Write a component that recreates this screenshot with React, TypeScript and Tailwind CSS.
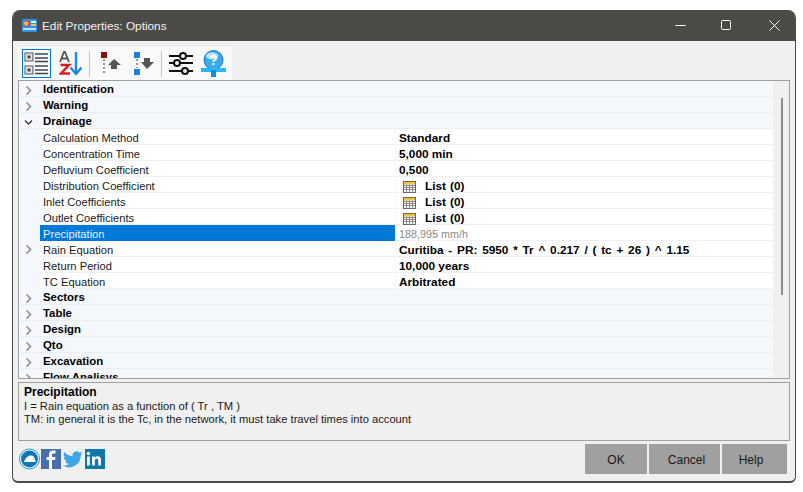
import React from "react";

const Chevron = ({ open }: { open?: boolean }) => (
  <svg width="9" height="9" viewBox="0 0 9 9" className="mt-px block" fill="none">
    {open ? (
      <path d="M1 2.500 L4.500 6 L8 2.500" stroke="#333" strokeWidth="1.300" />
    ) : (
      <path d="M2.500 0.500 L6.500 4.500 L2.500 8.500" stroke="#8a8a8a" strokeWidth="1.500" />
    )}
  </svg>
);

const GridIcon = () => (
  <svg width="13" height="12" viewBox="0 0 13 12" className="block">
    <rect x="0.500" y="0.500" width="12" height="11" fill="#fff" stroke="#666" />
    <rect x="1" y="1" width="11" height="2.500" fill="#f5c542" />
    <path d="M1 4.500H12M1 6.500H12M1 8.500H12M3.500 3.500V11.500M6.500 3.500V11.500M9.500 3.500V11.500" stroke="#888" strokeWidth="1" />
  </svg>
);

const Group = ({ name, open }: { name: string; open?: boolean }) => (
  <div className="flex h-4 shrink-0 items-center border-b border-[#e9eef5] bg-[#f4f7fc] pt-[2px]">
    <div className="flex w-[21px] shrink-0 justify-center pr-[3px]"><Chevron open={open} /></div>
    <span className="pl-[3px] text-[11.400px] font-bold text-black">{name}</span>
  </div>
);

const Row = ({
  name, children, expandable, selected, muted, wide,
}: { name: string; children: React.ReactNode; expandable?: boolean; selected?: boolean; muted?: boolean; wide?: boolean }) => (
  <div className="flex h-4 shrink-0 items-stretch bg-[#f4f7fc]">
    <div className="flex w-[21px] shrink-0 items-center justify-center pr-[3px]">{expandable && <Chevron />}</div>
    <div className={`flex w-[355px] shrink-0 items-center border-b pl-[3px] pt-1 text-[11.200px] ${selected ? "border-[#0078d7] bg-[#0078d7] text-[#eaf3fb]" : "border-[#f0f0f0] bg-white text-[#1a1a1a]"}`}>
      {name}
    </div>
    <div className={`ml-px flex flex-1 items-center border-b border-[#f0f0f0] bg-white pl-[3px] pt-1 ${muted ? "text-[10.800px] font-normal text-[#8a8a8a]" : "text-[11.800px] font-bold text-black"} ${wide ? "[word-spacing:1.500px]" : ""}`}>
      {children}
    </div>
  </div>
);

const ListVal = () => (
  <span className="flex items-center">
    <span className="ml-1 mr-[9px]"><GridIcon /></span>
    <span>List</span>
    <span className="ml-1">(0)</span>
  </span>
);

const Sep = () => <div className="h-[26px] w-px shrink-0 bg-[#c4c4c4]" />;

export default function App() {
  return (
    <div className="h-[492px] w-[803px] overflow-hidden bg-white" style={{ fontFamily: '"Liberation Sans", Arial, sans-serif' }}>
      <div className="ml-3 mt-[10px] flex h-[473px] w-[784px] flex-col overflow-hidden rounded-t-lg rounded-b-md border-x border-b-2 border-[#4b4a47] bg-[#f0f0f0]">
        {/* title bar */}
        <div className="flex h-[31px] shrink-0 items-center bg-[#4b4a47] pl-[9px] text-white">
          <svg width="15" height="13" viewBox="0 0 15 13" className="mr-[5px] block">
            <rect width="15" height="13" rx="1" fill="#2f8fe0" />
            <rect x="1" y="2" width="7" height="5" fill="#e8503a" />
            <circle cx="4" cy="4.500" r="2" fill="#f6c344" />
            <rect x="9" y="2" width="5" height="2" fill="#fff" />
            <rect x="9" y="5" width="5" height="2" fill="#f6c344" />
            <rect x="1" y="9" width="13" height="2" fill="#bfe0fb" />
          </svg>
          <span className="pt-[2px] text-[11.800px] text-[#f2f2f2]">Edit Properties: Options</span>
          <div className="ml-auto flex items-center">
            <svg width="11" height="11" viewBox="0 0 11 11" className="mr-[35px] block"><path d="M0.500 5.500H10.500" stroke="#fff" /></svg>
            <svg width="11" height="11" viewBox="0 0 11 11" className="mr-[37px] block"><rect x="0.500" y="0.500" width="9" height="9" rx="1" fill="none" stroke="#fff" /></svg>
            <svg width="11" height="11" viewBox="0 0 11 11" className="mr-[15px] block"><path d="M0.500 0.500L10.500 10.500M10.500 0.500L0.500 10.500" stroke="#fff" /></svg>
          </div>
        </div>

        <div className="flex min-h-0 flex-1 flex-col px-[5px]">
          {/* toolbar */}
          <div className="mt-[6px] flex h-[33px] w-[214px] shrink-0 items-center bg-[#f9f9f9] pl-1">
            <div className="flex h-[29px] w-[29px] shrink-0 items-center justify-center border border-[#0078d7] bg-[#f4f9fd]">
              <svg width="25" height="25" viewBox="0 0 25 25" className="block">
                <rect x="1" y="2" width="8" height="8" fill="#e4e4e4" stroke="#555" />
                <rect x="3.500" y="4.500" width="3" height="3" fill="#444" />
                <rect x="1" y="15" width="8" height="8" fill="#e4e4e4" stroke="#555" />
                <rect x="3.500" y="17.500" width="3" height="3" fill="#444" />
                <path d="M11 3H24M11 7H24M11 10.500H24M11 15H24M11 19H24M11 22.500H24" stroke="#444" strokeWidth="1.600" />
              </svg>
            </div>
            <svg width="23" height="25" viewBox="0 0 23 25" className="ml-2 block shrink-0">
              <path d="M1 11 L5 1 H6 L10 11 M2.500 7.500 H8.500" fill="none" stroke="#555" strokeWidth="1.800" />
              <path d="M1.500 14 H10 L2 22.500 H11" fill="none" stroke="#e01b24" strokeWidth="2.400" />
              <path d="M17 1 V22 M11.500 16.500 L17 23 L22.500 16.500" fill="none" stroke="#1e88e5" strokeWidth="2.400" />
            </svg>
            <div className="ml-[7px]"><Sep /></div>
            <svg width="20" height="25" viewBox="0 0 20 25" className="ml-[11px] block shrink-0">
              <rect x="0" y="1" width="6" height="6" fill="#8b1010" />
              <path d="M3 8V24" stroke="#777" strokeWidth="1.500" strokeDasharray="2 2" />
              <path d="M7 14 L13 8 L20 14 H16 V18 H10 V14Z" fill="#555" />
            </svg>
            <svg width="21" height="25" viewBox="0 0 21 25" className="ml-3 block shrink-0">
              <rect x="1" y="1" width="6" height="6" fill="#1e7fe0" />
              <rect x="1" y="18" width="6" height="6" fill="#1e7fe0" />
              <path d="M4 8V17" stroke="#777" strokeWidth="1.500" strokeDasharray="2 2" />
              <path d="M11 7 H17 V11 H21 L14 18 L8 11 H11Z" fill="#555" />
            </svg>
            <div className="ml-[7px]"><Sep /></div>
            <svg width="24" height="24" viewBox="0 0 24 24" className="ml-[7px] block shrink-0">
              <path d="M0 4H24M0 11H24M0 19H24" stroke="#111" strokeWidth="2" />
              <circle cx="14" cy="4" r="3" fill="#f9f9f9" stroke="#111" strokeWidth="2" />
              <circle cx="8" cy="11" r="3" fill="#f9f9f9" stroke="#111" strokeWidth="2" />
              <circle cx="16" cy="19" r="3" fill="#f9f9f9" stroke="#111" strokeWidth="2" />
            </svg>
            <svg width="25" height="27" viewBox="0 0 25 27" className="ml-2 block shrink-0">
              <circle cx="12.500" cy="10" r="9.500" fill="#3fa9f0" stroke="#1b78c8" />
              <ellipse cx="11" cy="6" rx="6" ry="3.500" fill="#bfe4fb" />
              <text x="12.500" y="15" textAnchor="middle" fontSize="14" fontWeight="bold" fill="#fff">?</text>
              <rect x="0" y="18" width="25" height="4" fill="#29b6f6" />
              <rect x="10" y="20" width="5" height="7" fill="#0f8fd8" />
            </svg>
          </div>

          {/* property grid */}
          <div className="flex h-[299px] shrink-0 border border-[#a0a0a0] bg-[#f4f7fc]">
            <div className="flex min-w-0 flex-1 flex-col overflow-hidden">
              <Group name="Identification" />
              <Group name="Warning" />
              <Group name="Drainage" open />
              <Row name="Calculation Method">Standard</Row>
              <Row name="Concentration Time">5,000 min</Row>
              <Row name="Defluvium Coefficient">0,500</Row>
              <Row name="Distribution Coefficient"><ListVal /></Row>
              <Row name="Inlet Coefficients"><ListVal /></Row>
              <Row name="Outlet Coefficients"><ListVal /></Row>
              <Row name="Precipitation" selected muted>188,995 mm/h</Row>
              <Row name="Rain Equation" expandable wide>Curitiba - PR: 5950 * Tr ^ 0.217 / ( tc + 26 ) ^ 1.15</Row>
              <Row name="Return Period">10,000 years</Row>
              <Row name="TC Equation">Arbitrated</Row>
              <Group name="Sectors" />
              <Group name="Table" />
              <Group name="Design" />
              <Group name="Qto" />
              <Group name="Excavation" />
              <Group name="Flow Analisys" />
            </div>
            <div className="flex w-4 shrink-0 justify-center bg-[#f0f0f0] pl-px pt-[17px]">
              <div className="h-[197px] w-[2px] bg-[#8c8c8c]" />
            </div>
          </div>

          {/* description */}
          <div className="mt-[3px] h-[59px] shrink-0 border border-[#a0a0a0] bg-[#f0f0f0] px-[5px] pt-[3px] text-[11.200px] leading-[13.500px] text-[#1a1a1a]">
            <div className="text-[12px] font-bold text-black">Precipitation</div>
            <div>I = Rain equation as a function of ( Tr , TM )</div>
            <div>TM: in general it is the Tc, in the network, it must take travel times into account</div>
          </div>

          {/* footer */}
          <div className="mt-[3px] flex h-[31px] shrink-0 items-center">
            <div className="flex items-center pb-px">
              <svg width="22" height="24" viewBox="0 0 22 24" className="ml-px block">
                <circle cx="10.500" cy="12" r="10" fill="#fff" stroke="#1a9ad6" />
                <circle cx="10.500" cy="12" r="8.500" fill="#0f76b5" />
                <path d="M5 15 C7 9 12 7 15 10 L17 15Z" fill="#fff" />
              </svg>
              <svg width="20" height="20" viewBox="0 0 20 20" className="block">
                <rect width="20" height="20" fill="#4a6ea9" />
                <path d="M11 20V11H14L14.500 8H11V6C11 5 11.500 4.500 12.500 4.500H14.500V1.500H12C9.500 1.500 8 3 8 5.500V8H5.500V11H8V20Z" fill="#fff" />
              </svg>
              <svg width="20" height="20" viewBox="0 0 20 20" className="ml-[2px] block">
                <path d="M19.500 4.200c-.7.3-1.500.5-2.300.6.8-.5 1.500-1.300 1.800-2.200-.8.5-1.700.8-2.600 1A4 4 0 0 0 9.600 7.300 11.400 11.400 0 0 1 1.400 3.100a4 4 0 0 0 1.200 5.400c-.6 0-1.300-.2-1.800-.5 0 2 1.400 3.600 3.200 4-.6.1-1.200.2-1.800.1.500 1.600 2 2.700 3.700 2.800A8 8 0 0 1 0 16.500 11.400 11.400 0 0 0 17.600 6.400c.8-.6 1.400-1.300 1.900-2.200z" fill="#3ea6e6" />
              </svg>
              <div className="ml-[2px] h-5 w-5 bg-[#0e76a8]">
                <svg width="20" height="20" viewBox="0 0 20 20" className="block">
                  <rect x="2" y="7.500" width="2.800" height="9" fill="#fff" />
                  <circle cx="3.400" cy="4.500" r="1.700" fill="#fff" />
                  <path d="M7 7.500H9.700V8.800C10.300 7.900 11.300 7.300 12.600 7.300 15.200 7.300 16 8.900 16 11.300V16.500H13.200V11.800C13.200 10.600 12.900 9.700 11.700 9.700 10.500 9.700 9.900 10.600 9.900 11.800V16.500H7Z" fill="#fff" />
                </svg>
              </div>
            </div>
            <div className="ml-auto mr-[3px] flex gap-[2px] self-start text-[12px] text-[#1a1a1a]">
              <div className="flex h-[30px] w-[62px] items-center justify-center bg-[#a0a0a0] pt-px">OK</div>
              <div className="flex h-[30px] w-[71px] items-center justify-center bg-[#a0a0a0] pl-1 pt-px">Cancel</div>
              <div className="flex h-[30px] w-[65px] items-center justify-center bg-[#a0a0a0] pr-[7px] pt-px">Help</div>
            </div>
          </div>
        </div>
      </div>
    </div>
  );
}
